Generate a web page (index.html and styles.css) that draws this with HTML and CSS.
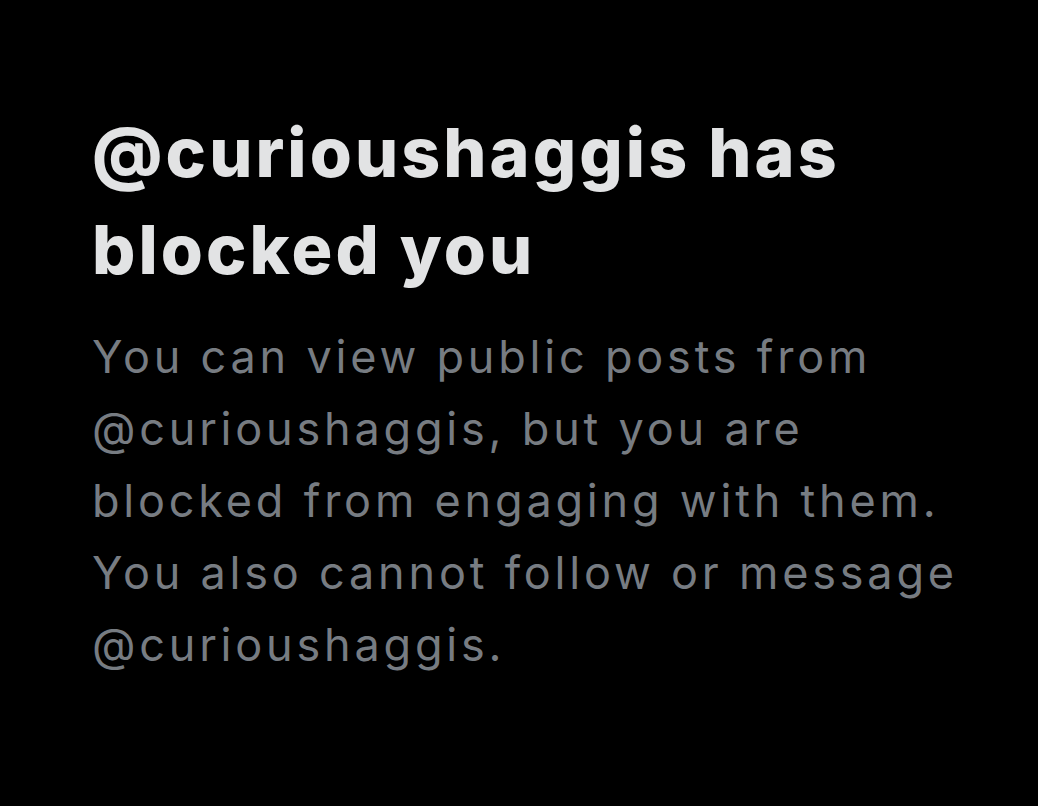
FILE: index.html
```html
<!DOCTYPE html>
<html lang="en">
<head>
<meta charset="utf-8">
<title>Blocked</title>
<link rel="stylesheet" href="styles.css">
</head>
<body>
<main class="notice">
  <h1 class="notice-title">@curioushaggis has blocked you</h1>
  <p class="notice-body">You can view public posts from @curioushaggis, but you are blocked from engaging with them. You also cannot follow or message @curioushaggis.</p>
</main>
</body>
</html>
```
FILE: styles.css
```css
html, body {
  margin: 0;
  padding: 0;
  background: #000;
  height: 100%;
}
body {
  font-family: Inter, "Noto Sans", sans-serif;
}
.notice {
  padding: 104px 0 0 92px;
}
.notice-title {
  margin: 0;
  font-size: 68px;
  line-height: 97px;
  font-weight: 800;
  letter-spacing: 3.1px;
  color: #e2e3e4;
  width: 820px;
}
.notice-body {
  margin: 23px 0 0;
  font-size: 45px;
  line-height: 72px;
  font-weight: 400;
  letter-spacing: 3.8px;
  color: #777c82;
  width: 900px;
}
```
